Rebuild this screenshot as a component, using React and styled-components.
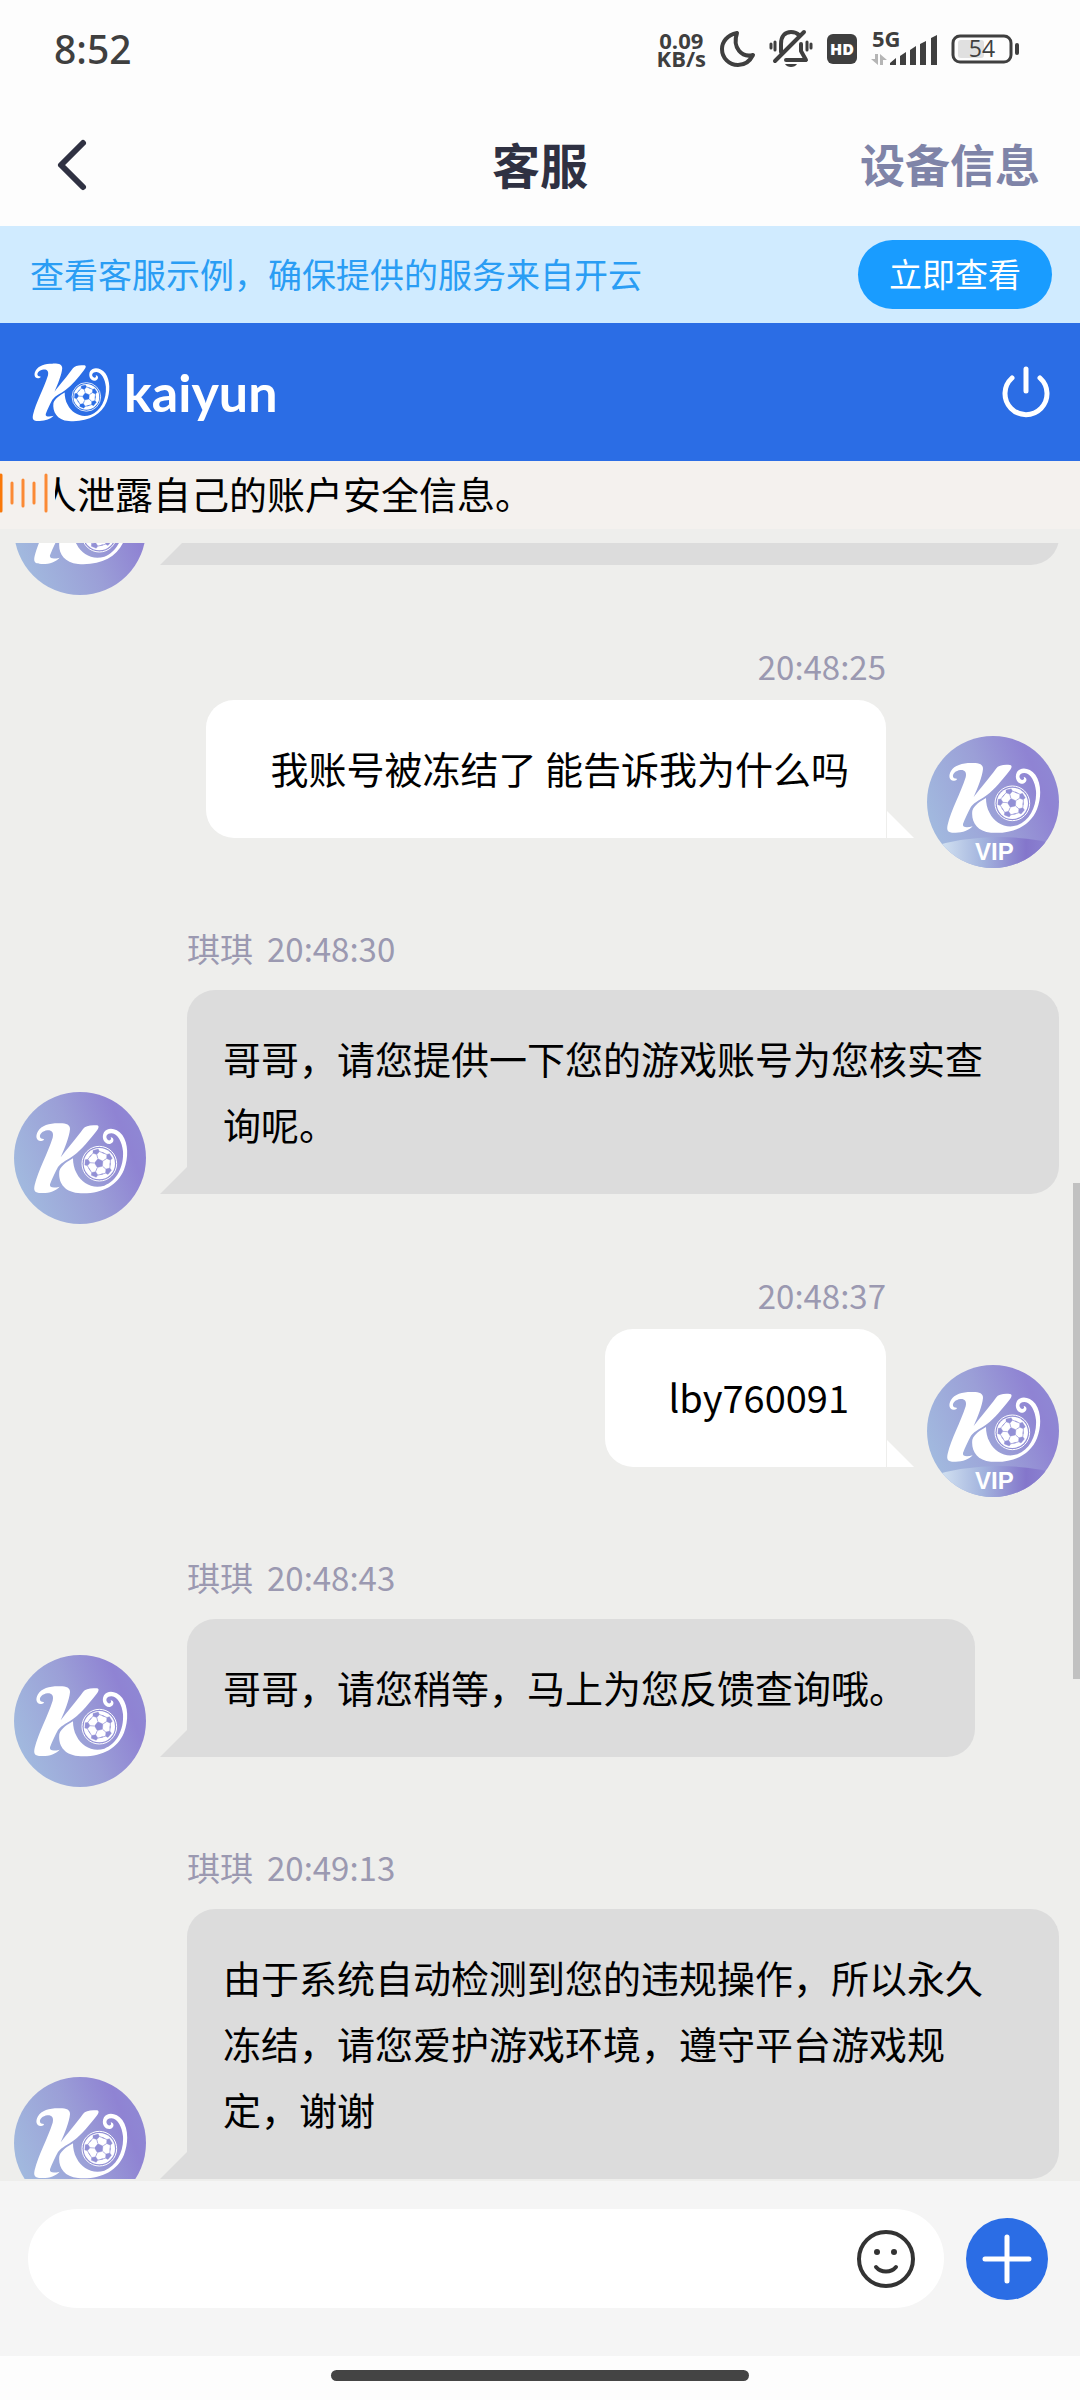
import styled, { createGlobalStyle } from "styled-components";

const GlobalStyle = createGlobalStyle`
    * {
        box-sizing: border-box;
    }

    body {
        margin: 0;
        background: #fdfdfd;
        font-family: "Noto Sans CJK SC", "Noto Sans", sans-serif;
    }

    button {
        padding: 0;
        border: none;
        background: none;
        font-family: inherit;
        cursor: pointer;
    }

    svg {
        display: block;
        flex: none;
        overflow: visible;
    }
`;

//#region page styles
const Page = styled.div`
    height: 100vh;
    display: flex;
    flex-direction: column;
    overflow: hidden;
`;

const StatusBar = styled.div`
    flex: none;
    height: 104px;
    padding: 0 60px 6px 54px;
    display: flex;
    align-items: center;
    justify-content: space-between;
    color: #3f3f3f;
    font-family: "Noto Sans", sans-serif;
`;

const Clock = styled.span`
    font-size: 39px;
    font-weight: 500;
    line-height: 56px;
`;

const StatusIcons = styled.div`
    display: flex;
    align-items: center;
    gap: 14px;
`;

const NetSpeed = styled.span`
    font-family: "Open Sans", sans-serif;
    font-size: 22px;
    font-weight: 700;
    line-height: 18px;
    text-align: center;
`;

const NavBar = styled.header`
    flex: none;
    height: 122px;
    padding: 0 40px;
    display: grid;
    grid-template-columns: 1fr auto 1fr;
    align-items: center;
`;

const BackButton = styled.button`
    justify-self: start;
`;

const Title = styled.h1`
    margin: 0;
    padding-bottom: 5px;
    color: #2f3142;
    font-size: 48px;
    font-weight: 700;
    line-height: 60px;
`;

const DeviceButton = styled.button`
    justify-self: end;
    padding-bottom: 3px;
    color: #7f84a8;
    font-size: 45px;
    font-weight: 700;
    line-height: 60px;
`;

const Notice = styled.div`
    flex: none;
    height: 97px;
    padding: 0 28px 0 30px;
    display: flex;
    align-items: center;
    justify-content: space-between;
    background: #d0ebff;
    color: #2a9df4;
    font-size: 34px;
`;

const NoticeText = styled.span`
    padding-bottom: 3px;
`;

const CheckButton = styled.button`
    height: 69px;
    padding: 0 31px 3px;
    border-radius: 35px;
    background: #199cff;
    color: #fff;
    font-size: 33px;
`;

const BrandBar = styled.div`
    flex: none;
    height: 138px;
    padding: 0 29px 0 32px;
    display: flex;
    align-items: center;
    justify-content: space-between;
    background: #2b6de5;
`;

const Brand = styled.div`
    display: flex;
    align-items: center;
    gap: 14px;
    color: #fff;
    font-family: Lato, sans-serif;
    font-size: 52px;
    font-weight: 700;
    line-height: 60px;
`;

const Marquee = styled.div`
    flex: none;
    height: 68px;
    display: flex;
    align-items: center;
    gap: 7px;
    background: #f4f1ee;
`;

const MarqueeTrack = styled.div`
    flex: 1;
    padding-bottom: 5px;
    overflow: hidden;
    white-space: nowrap;
    font-size: 38px;
    line-height: 60px;
`;

const MarqueeText = styled.span`
    display: block;
    margin-left: -16px;
`;

const Chat = styled.main`
    position: relative;
    flex: 1;
    min-height: 0;
    padding: 14px 0 2px;
    display: flex;
    background: #eeeeec;
`;

const MessageList = styled.div`
    flex: 1;
    display: flex;
    flex-direction: column;
    justify-content: flex-end;
    overflow: hidden;
`;

const ScrollThumb = styled.div`
    position: absolute;
    top: 654px;
    right: 0;
    width: 7px;
    height: 30%;
    background: #c1c1c1;
`;

const Message = styled.article`
    flex: none;
    display: flex;
    flex-direction: ${(p) => (p.$mine ? "row-reverse" : "row")};
    align-items: flex-end;
    gap: 41px;
    margin-top: ${(p) => (p.$mine ? "49px" : "58px")};
    padding: 0 21px 0 14px;

    &:last-child {
        margin-bottom: -30px;
    }
`;

const MessageBody = styled.div`
    display: flex;
    flex-direction: column;
    align-items: ${(p) => (p.$mine ? "flex-end" : "flex-start")};
    padding-bottom: 30px;
`;

const Meta = styled.div`
    display: flex;
    gap: 14px;
    margin-bottom: ${(p) => (p.$mine ? "12px" : "20px")};
    color: #9b99b1;
    font-size: 33px;
    line-height: 44px;
`;

const Bubble = styled.p`
    position: relative;
    margin: 0;
    min-height: 138px;
    padding: ${(p) => (p.$mine ? "35px 37px 37px 64px" : "35px 68px 37px 36px")};
    border-radius: ${(p) => (p.$mine ? "28px 28px 0 28px" : "28px 28px 28px 0")};
    background: ${(p) => (p.$mine ? "#fff" : "#dcdcdc")};
    color: #000;
    font-size: 38px;
    line-height: 66px;

    &::after {
        content: "";
        position: absolute;
        bottom: 0;
        ${(p) => (p.$mine ? "right: -28px" : "left: -27px")};
        width: 27px;
        height: 27px;
        background: inherit;
        clip-path: ${(p) =>
            p.$mine ? "polygon(0 0, 100% 100%, 0 100%)" : "polygon(100% 0, 100% 100%, 0 100%)"};
    }
`;

const Composer = styled.form`
    flex: none;
    padding: 28px 32px 48px 28px;
    display: flex;
    align-items: center;
    gap: 22px;
    background: #f5f5f5;
`;

const InputPill = styled.div`
    flex: 1;
    height: 99px;
    padding: 0 29px;
    display: flex;
    align-items: center;
    border-radius: 50px;
    background: #fff;
`;

const TextInput = styled.input`
    flex: 1;
    min-width: 0;
    height: 66px;
    border: none;
    outline: none;
    background: transparent;
    font-family: inherit;
    font-size: 38px;
`;

const PlusButton = styled.button`
    width: 82px;
    height: 82px;
    display: grid;
    place-items: center;
    border-radius: 50%;
    background: #2b6de5;
`;

const HomeBar = styled.div`
    flex: none;
    height: 44px;
    padding-top: 14px;
    display: flex;
    justify-content: center;
`;

const HomeHandle = styled.div`
    width: 418px;
    height: 11px;
    border-radius: 6px;
    background: #444;
`;
//#endregion

//#region icons
function BallPatches({ color }) {
    const turns = [0, 72, 144, 216, 288];
    return (
        <g fill={color} stroke={color} strokeLinejoin="round">
            <polygon points="0,-14 13,-4 8,11 -8,11 -13,-4" />
            {turns.map((t) => (
                <g key={t} transform={`rotate(${t})`}>
                    <line x1="0" y1="-15" x2="0" y2="-27" strokeWidth="2" />
                    <polygon points="0,-27 10,-34 8,-42 -8,-42 -10,-34" />
                    <line x1="10" y1="-34" x2="23" y2="-25" strokeWidth="2" />
                    <line x1="-10" y1="-34" x2="-23" y2="-25" strokeWidth="2" />
                </g>
            ))}
        </g>
    );
}

function KMark({ patch }) {
    return (
        <g fill="#fff">
            <path d="M24 55 C9 57 5 40 14 26 C24 9 48 2 74 2 C97 1 111 5 110 20 C108 42 94 78 82 104 C100 80 130 46 149 19 C156 9 172 6 191 8 C199 10 196 17 189 26 C167 54 146 80 122 98 C105 111 86 118 74 133 C65 150 56 168 50 185 C48 195 60 197 79 192 C67 204 50 211 28 211 C4 212 0 205 4 187 C14 145 43 92 58 45 C62 28 54 22 42 23 C28 25 18 34 20 43 C23 50 29 47 32 50 C31 53 28 55 24 55 Z" />
            <path d="M119 107 C103 116 84 128 78 145 C74 176 90 207 134 211 C202 216 252 190 272 141 C286 104 285 62 267 37 C250 15 222 13 212 29 C203 45 212 66 230 64 C243 61 244 45 232 44 C236 52 228 56 223 51 C214 42 222 31 235 32 C254 34 266 58 269 86 C272 132 250 175 213 189 C179 200 145 183 130 152 C122 138 119 122 119 107 Z" />
            <circle cx="198" cy="123" r="52" fill={patch} stroke="#fff" strokeWidth="3" />
            <circle cx="198" cy="123" r="47" />
            <g transform="translate(197 122) rotate(-14)">
                <BallPatches color={patch} />
            </g>
        </g>
    );
}

function Avatar({ vip }) {
    const id = vip ? "vip" : "agent";
    return (
        <svg width="132" height="132" viewBox="0 0 396 396" role="img" aria-label={vip ? "VIP" : "客服"}>
            <defs>
                <linearGradient id={`${id}-bg`} x1="0" y1="0.7" x2="1" y2="0.3">
                    <stop offset="0" stopColor="#a2bbdf" />
                    <stop offset="0.5" stopColor="#9b9fd7" />
                    <stop offset="0.85" stopColor="#8f83d3" />
                    <stop offset="1" stopColor="#8f88d4" />
                </linearGradient>
                <linearGradient id={`${id}-band`} x1="0" y1="0" x2="1" y2="0">
                    <stop offset="0.1" stopColor="#d3e2f1" />
                    <stop offset="0.42" stopColor="#a3b4de" />
                    <stop offset="0.75" stopColor="#8476cb" />
                    <stop offset="1" stopColor="#8f88d4" />
                </linearGradient>
                <clipPath id={`${id}-clip`}>
                    <circle cx="198" cy="198" r="198" />
                </clipPath>
            </defs>
            <circle cx="198" cy="198" r="198" fill={`url(#${id}-bg)`} />
            <g transform={vip ? "translate(58 79)" : "translate(58 92)"}>
                <KMark patch="#9290d5" />
            </g>
            {vip && (
                <g clipPath={`url(#${id}-clip)`}>
                    <path d="M0 336 Q198 276 396 326 V396 H0 Z" fill={`url(#${id}-band)`} />
                    <text
                        x="202"
                        y="372"
                        textAnchor="middle"
                        fill="#fff"
                        fontFamily="Liberation Sans, sans-serif"
                        fontSize="72"
                        fontWeight="700"
                    >
                        VIP
                    </text>
                </g>
            )}
        </svg>
    );
}

function MoonIcon() {
    return (
        <svg width="35" height="36" viewBox="0 0 35 36" fill="none" stroke="currentColor" strokeWidth="4" strokeLinejoin="round">
            <path d="M17 2 C7 4 2 11 2 18 C2 27 9 34 18 34 C25 34 30 30 33 24 C22 27 12 17 17 2 Z" />
        </svg>
    );
}

function MutedBellIcon() {
    return (
        <svg width="44" height="38" viewBox="0 0 44 38" fill="none" stroke="currentColor" strokeLinecap="round">
            <path d="M12 22 V14 C12 6 16 2 22 2 C25 2 28 3 30 5" strokeWidth="4" />
            <path d="M32 14 V21 L37 30 H17" strokeWidth="4" strokeLinejoin="round" />
            <path d="M6 31 L35 2" strokeWidth="4" />
            <path d="M16 34 H28 C26 38 18 38 16 34 Z" fill="currentColor" stroke="none" />
            <path d="M6 12 V20 M38 12 V20" strokeWidth="3" />
            <path d="M2 14 V18 M42 14 V18" strokeWidth="3" />
        </svg>
    );
}

function HdIcon() {
    return (
        <svg width="30" height="30" viewBox="0 0 30 30">
            <rect width="30" height="30" rx="6" fill="currentColor" />
            <text x="15" y="21" textAnchor="middle" fill="#fff" fontFamily="Open Sans, sans-serif" fontSize="16" fontWeight="800">
                HD
            </text>
        </svg>
    );
}

function SignalIcon() {
    return (
        <svg width="66" height="34" viewBox="0 0 66 34" fill="currentColor">
            <text x="1" y="15" fontFamily="Open Sans, sans-serif" fontSize="22" fontWeight="700">
                5G
            </text>
            <path d="M4 22 H7 V33 L0 27 H4 Z M9 33 V22 L16 28 H12 V33 Z" fill="#b5b5b5" />
            <path d="M19 33 V31 L25 26 V33 Z M29 33 V24 L35 20 V33 Z M39 33 V18 L45 14 V33 Z M49 33 V12 L55 9 V33 Z M60 33 V6 L66 3 V33 Z" />
        </svg>
    );
}

function BatteryIcon() {
    return (
        <svg width="69" height="30" viewBox="0 0 69 30">
            <rect x="7" y="6" width="26" height="18" rx="3" fill="#e0e0e0" />
            <rect x="2" y="2" width="58" height="26" rx="7" fill="none" stroke="currentColor" strokeWidth="3" />
            <path d="M66 11 V19" stroke="currentColor" strokeWidth="4" strokeLinecap="round" />
            <text x="31" y="23" textAnchor="middle" fill="currentColor" fontFamily="Open Sans, sans-serif" fontSize="23" fontWeight="500">
                54
            </text>
        </svg>
    );
}

function BackIcon() {
    return (
        <svg width="60" height="60" viewBox="0 0 60 60" fill="none" stroke="#2f3142" strokeWidth="6" strokeLinecap="round" strokeLinejoin="round">
            <path d="M43 8 L21 30 L43 52" />
        </svg>
    );
}

function PowerIcon() {
    return (
        <svg width="50" height="56" viewBox="0 0 50 56" fill="none" stroke="#fff" strokeWidth="5" strokeLinecap="round">
            <path d="M11 14 A21 21 0 1 0 39 14" />
            <path d="M25 5 V27" />
        </svg>
    );
}

function WaveIcon() {
    return (
        <svg width="48" height="40" viewBox="0 0 48 40" fill="none" stroke="#fb8a35" strokeWidth="3" strokeLinecap="round">
            <path d="M1 0 V36" stroke="#f9790a" />
            <path d="M12 8 V28 M23 5 V31 M34 8 V28 M46 0 V36" />
        </svg>
    );
}

function SmileIcon() {
    return (
        <svg width="58" height="58" viewBox="0 0 58 58" fill="none" stroke="#333" strokeWidth="4" strokeLinecap="round">
            <circle cx="29" cy="29" r="27" />
            <path d="M19 37 C24 43 34 43 39 37" />
            <circle cx="20" cy="22" r="3" fill="#333" stroke="none" />
            <circle cx="37" cy="22" r="3" fill="#333" stroke="none" />
        </svg>
    );
}

function PlusIcon() {
    return (
        <svg width="50" height="50" viewBox="0 0 50 50" stroke="#fff" strokeWidth="5" strokeLinecap="round">
            <path d="M25 3 V47 M3 25 H47" />
        </svg>
    );
}
//#endregion

const messages = [
    { id: 2, mine: true, time: "20:48:25", text: "我账号被冻结了 能告诉我为什么吗" },
    { id: 3, name: "琪琪", time: "20:48:30", text: "哥哥，请您提供一下您的游戏账号为您核实查询呢。" },
    { id: 4, mine: true, time: "20:48:37", text: "lby760091" },
    { id: 5, name: "琪琪", time: "20:48:43", text: "哥哥，请您稍等，马上为您反馈查询哦。" },
    {
        id: 6,
        name: "琪琪",
        time: "20:49:13",
        text: "由于系统自动检测到您的违规操作，所以永久冻结，请您爱护游戏环境，遵守平台游戏规定，谢谢",
    },
];

// older message, only its lower edge is still in view
const OldBody = styled(MessageBody)`
    flex: 1;
    align-items: stretch;
`;

function App() {
    return (
        <Page>
            <GlobalStyle />
            <StatusBar>
                <Clock>8:52</Clock>
                <StatusIcons>
                    <NetSpeed>
                        0.09
                        <br />
                        KB/s
                    </NetSpeed>
                    <MoonIcon />
                    <MutedBellIcon />
                    <HdIcon />
                    <SignalIcon />
                    <BatteryIcon />
                </StatusIcons>
            </StatusBar>
            <NavBar>
                <BackButton type="button" aria-label="返回">
                    <BackIcon />
                </BackButton>
                <Title>客服</Title>
                <DeviceButton type="button">设备信息</DeviceButton>
            </NavBar>
            <Notice>
                <NoticeText>查看客服示例，确保提供的服务来自开云</NoticeText>
                <CheckButton type="button">立即查看</CheckButton>
            </Notice>
            <BrandBar>
                <Brand>
                    <svg width="78" height="59" viewBox="0 0 284 214" aria-hidden="true">
                        <KMark patch="#2b6de5" />
                    </svg>
                    <span>kaiyun</span>
                </Brand>
                <button type="button" aria-label="退出">
                    <PowerIcon />
                </button>
            </BrandBar>
            <Marquee>
                <WaveIcon />
                <MarqueeTrack>
                    <MarqueeText>人泄露自己的账户安全信息。</MarqueeText>
                </MarqueeTrack>
            </Marquee>
            <Chat>
                <MessageList>
                    <Message>
                        <Avatar />
                        <OldBody>
                            <Bubble />
                        </OldBody>
                    </Message>
                    {messages.map((m) => (
                        <Message key={m.id} $mine={m.mine}>
                            <Avatar vip={m.mine} />
                            <MessageBody $mine={m.mine}>
                                <Meta $mine={m.mine}>
                                    {m.name && <span>{m.name}</span>}
                                    <time>{m.time}</time>
                                </Meta>
                                <Bubble $mine={m.mine}>{m.text}</Bubble>
                            </MessageBody>
                        </Message>
                    ))}
                </MessageList>
                <ScrollThumb />
            </Chat>
            <Composer onSubmit={(e) => e.preventDefault()}>
                <InputPill>
                    <TextInput type="text" aria-label="输入消息" />
                    <button type="button" aria-label="表情">
                        <SmileIcon />
                    </button>
                </InputPill>
                <PlusButton type="button" aria-label="更多">
                    <PlusIcon />
                </PlusButton>
            </Composer>
            <HomeBar>
                <HomeHandle />
            </HomeBar>
        </Page>
    );
}

export default App;
